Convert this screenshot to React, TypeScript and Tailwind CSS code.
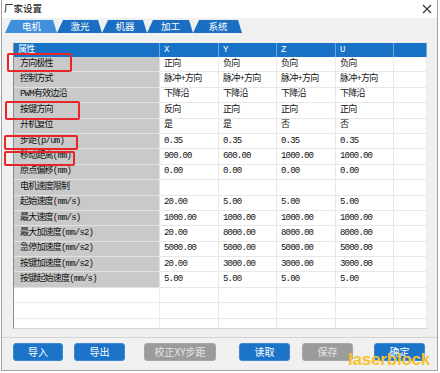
import React from "react";

const rows: [string, string[]][] = [
  ["方向极性", ["正向", "负向", "负向", "负向"]],
  ["控制方式", ["脉冲+方向", "脉冲+方向", "脉冲+方向", "脉冲+方向"]],
  ["PWM有效边沿", ["下降沿", "下降沿", "下降沿", "下降沿"]],
  ["按键方向", ["反向", "正向", "正向", "正向"]],
  ["开机复位", ["是", "是", "否", "否"]],
  ["步距(p/um)", ["0.35", "0.35", "0.35", "0.35"]],
  ["移动距离(mm)", ["900.00", "600.00", "1000.00", "1000.00"]],
  ["原点偏移(mm)", ["0.00", "0.00", "0.00", "0.00"]],
  ["电机速度限制", ["", "", "", ""]],
  ["起始速度(mm/s)", ["20.00", "5.00", "5.00", "5.00"]],
  ["最大速度(mm/s)", ["1000.00", "1000.00", "1000.00", "1000.00"]],
  ["最大加速度(mm/s2)", ["20.00", "8000.00", "8000.00", "8000.00"]],
  ["急停加速度(mm/s2)", ["5000.00", "5000.00", "5000.00", "5000.00"]],
  ["按键加速度(mm/s2)", ["20.00", "3000.00", "3000.00", "3000.00"]],
  ["按键起始速度(mm/s)", ["5.00", "5.00", "5.00", "5.00"]],
  ["", ["", "", "", ""]],
  ["", ["", "", "", ""]],
  ["", ["", "", "", ""]],
  ["", ["", "", "", ""]],
];

const tabs = [
  { t: "电机", w: "w-[52px]", sel: true },
  { t: "激光", w: "w-[45px]", sel: false },
  { t: "机器", w: "w-[45px]", sel: false },
  { t: "加工", w: "w-[46px]", sel: false },
  { t: "系统", w: "w-[49px]", sel: false },
];

const mono = "font-['Liberation_Mono','Noto_Sans_CJK_SC',monospace] text-[9px] tracking-[-0.8px]";
const sans = "font-['Noto_Sans_CJK_SC','Liberation_Sans',sans-serif]";

function Btn({ label, blue, w, ml }: { label: string; blue: boolean; w: string; ml: string }) {
  return (
    <div
      className={`${w} ${ml} h-[18px] rounded-[3px] flex items-center justify-center text-[10px] leading-none ${sans} ${
        blue ? "bg-[#1b74c8] text-white border border-[#3a8ad6]" : "bg-[#9b9b9b] text-[#e4e4e4] border border-[#a8a8a8]"
      }`}
    >
      {label}
    </div>
  );
}

export default function App() {
  return (
    <div className="relative w-[440px] h-[373px] bg-white overflow-hidden">
      <div className="ml-[1px] w-[437px] h-[371px] border-x border-b border-[#a2a2a2] flex flex-col bg-[#f0f0f0]">
        <div className="h-[18px] shrink-0 bg-white flex items-center justify-between pl-[2px] pr-[5px]">
          <span className={`text-[9.5px] leading-none text-black ${sans}`}>厂家设置</span>
          <svg width="10" height="10" viewBox="0 0 10 10">
            <path d="M1 1 L9 9 M9 1 L1 9" stroke="#333" strokeWidth="1.1" fill="none" />
          </svg>
        </div>
        <div className="mt-[2px] h-[13px] shrink-0 flex pl-[3px]">
          {tabs.map((tb) => (
            <div
              key={tb.t}
              className={`${tb.w} h-[13px] flex items-center justify-center text-[9.5px] leading-none text-white ${sans} [clip-path:polygon(6px_0,calc(100%_-_4px)_0,100%_100%,0_100%)] ${
                tb.sel ? "bg-[#3f8fdc]" : "bg-[#1a6fc2]"
              }`}
            >
              <span className="pl-[1px]">{tb.t}</span>
            </div>
          ))}
        </div>
        <div className="ml-[11px] mt-[10px] w-[414px] h-[286px] shrink-0 border-l border-[#8c8c8c] border-b border-b-[#d4d4d4] bg-white overflow-hidden">
          <div className={`grid grid-cols-[146px_59px_58px_59px_58px_33px] h-[14px] bg-[#1872c6] text-white ${mono}`}>
            {["属性", "X", "Y", "Z", "U", ""].map((h, i) => (
              <div
                key={i}
                className={`flex items-center leading-none border-r border-[#6fa6dc] ${i === 0 ? "pl-[4px]" : "pl-[4px]"}`}
              >
                {h}
              </div>
            ))}
          </div>
          {rows.map(([label, vals], r) => (
            <div key={r} className={`grid grid-cols-[146px_59px_58px_59px_58px_33px] h-[15.4px] ${mono} text-[#111]`}>
              <div
                className={`flex items-center leading-none pl-[6px] border-b border-r ${
                  label || r < 15 ? "bg-[#c9c9c9] border-[#e2e2e2]" : "bg-white border-[#ececec]"
                }`}
              >
                {label}
              </div>
              {vals.map((v, i) => (
                <div key={i} className="flex items-center leading-none pl-[4px] border-b border-r border-[#e8e8e8]">
                  {v}
                </div>
              ))}
              <div className="border-b border-r border-[#e8e8e8]" />
            </div>
          ))}
        </div>
        <div className="mt-[8px] h-px shrink-0 bg-[#d4d4d4]" />
        <div className="mt-[5px] flex shrink-0 ml-[11px]">
          <Btn label="导入" blue w="w-[50px]" ml="ml-0" />
          <Btn label="导出" blue w="w-[51px]" ml="ml-[11px]" />
          <Btn label="校正XY步距" blue={false} w="w-[72px]" ml="ml-[19px]" />
          <Btn label="读取" blue w="w-[51px]" ml="ml-[23px]" />
          <Btn label="保存" blue={false} w="w-[51px]" ml="ml-[12px]" />
          <Btn label="确定" blue w="w-[51px]" ml="ml-[21px]" />
        </div>
      </div>

      <div className="absolute left-[7px] top-[53px] w-[65px] h-[19px] border-2 border-[#e8262a] rounded-[2px]" />
      <div className="absolute left-[5px] top-[101px] w-[75px] h-[19px] border-2 border-[#e8262a] rounded-[2px]" />
      <div className="absolute left-[4px] top-[135px] w-[74px] h-[15px] border-2 border-[#e8262a] rounded-[2px]" />
      <div className="absolute left-[4px] top-[151px] w-[71px] h-[15px] border-2 border-[#e8262a] rounded-[2px]" />

      <div className="absolute left-[348px] top-[351px] text-[17px] leading-none font-bold text-[#f6c131] font-['Liberation_Sans',sans-serif] tracking-[-0.2px]">
        laserblock
      </div>
    </div>
  );
}
